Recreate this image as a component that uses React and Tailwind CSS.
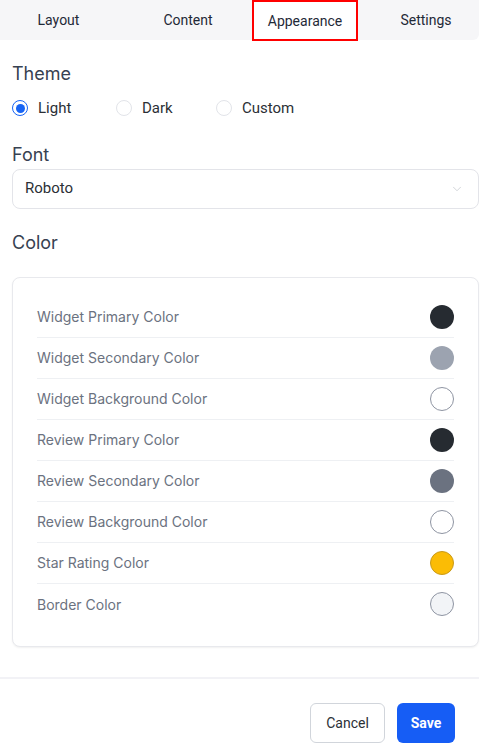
import { ChevronDown } from 'lucide-react';

const tabs = [
  { label: 'Layout', cls: 'w-[117px]' },
  { label: 'Content', cls: 'ml-[21px] w-[100px]' },
  { label: 'Appearance', cls: 'ml-[14px] w-[106px]', active: true },
  { label: 'Settings', cls: 'ml-[15px] w-[106px]' },
];

const themes = [
  { id: 'light', label: 'Light', checked: true, width: 'w-[104px]' },
  { id: 'dark', label: 'Dark', checked: false, width: 'w-[100px]' },
  { id: 'custom', label: 'Custom', checked: false, width: 'w-auto' },
];

const colors = [
  { label: 'Widget Primary Color', swatch: 'bg-[#262b31]' },
  { label: 'Widget Secondary Color', swatch: 'bg-[#9ca3b0]' },
  { label: 'Widget Background Color', swatch: 'bg-white border border-[#8e94a2]' },
  { label: 'Review Primary Color', swatch: 'bg-[#262b31]' },
  { label: 'Review Secondary Color', swatch: 'bg-[#6b7280]' },
  { label: 'Review Background Color', swatch: 'bg-white border border-[#8e94a2]' },
  { label: 'Star Rating Color', swatch: 'bg-[#fbbc05] border border-[#c99a1a]' },
  { label: 'Border Color', swatch: 'bg-[#f2f4f7] border border-[#8e94a2]' },
];

function Radio({ label, checked, width }) {
  return (
    <label className={`flex items-center gap-[10px] ${width}`}>
      <span
        className={`flex h-4 w-4 items-center justify-center rounded-full ${
          checked ? 'border-[1.5px] border-[#1764f4]' : 'border border-[#e2e4e9]'
        }`}
      >
        {checked && <span className="h-[9px] w-[9px] rounded-full bg-[#1764f4]" />}
      </span>
      <span className="text-[15px] text-[#2b2f36]">{label}</span>
    </label>
  );
}

export default function App() {
  return (
    <div className="min-h-[752px] w-[479px] bg-white font-['Roboto',sans-serif]">
      <div className="flex h-10 rounded-br-md bg-[#f6f6f8]">
        {tabs.map((tab) => (
          <div
            key={tab.label}
            className={`flex items-center justify-center text-sm text-[#1f2937] ${tab.cls} ${
              tab.active ? 'h-[41px] border-2 border-[#ff0000] bg-white' : ''
            }`}
          >
            {tab.label}
          </div>
        ))}
      </div>

      <div className="pl-3">
        <h3 className="mt-[22px] font-['Inter',sans-serif] text-lg leading-6 text-[#374151]">Theme</h3>
        <div className="mt-[11px] flex items-center">
          {themes.map((t) => (
            <Radio key={t.id} {...t} />
          ))}
        </div>

        <h3 className="mt-[23px] font-['Inter',sans-serif] text-lg leading-6 text-[#374151]">Font</h3>
        <button className="mt-[2px] flex h-10 w-full items-center justify-between rounded-lg border border-[#e3e4e9] pl-3 pr-[14px] text-[15px] text-[#2b2f36]">
          <span>Roboto</span>
          <ChevronDown className="h-[14px] w-[14px] text-[#c3c6cc]" strokeWidth={1.25} />
        </button>

        <h3 className="mt-[22px] font-['Inter',sans-serif] text-lg leading-6 text-[#374151]">Color</h3>

        <div className="mt-[22px] rounded-lg border border-[#e8e9ed] bg-white px-6 pb-[21px] pt-[19px] shadow-[0_1px_2px_rgba(0,0,0,0.06)]">
          {colors.map((c, i) => (
            <div
              key={c.label}
              className={`flex h-[41px] items-center justify-between ${
                i < colors.length - 1 ? 'border-b border-[#eef0f3]' : ''
              }`}
            >
              <span className="font-['Inter',sans-serif] text-[14px] text-[#6b7280]">{c.label}</span>
              <span className={`h-6 w-6 rounded-full ${c.swatch}`} />
            </div>
          ))}
        </div>
      </div>

      <div className="mt-[30px] border-t-2 border-[#f2f2f6]" />

      <div className="flex justify-end gap-3 px-6 pt-[24px]">
        <button className="h-10 w-[75px] rounded-md border border-[#d1d5db] bg-white text-sm text-[#2b2f36]">
          Cancel
        </button>
        <button className="h-10 w-[58px] rounded-md bg-[#165df5] text-sm font-bold text-white">Save</button>
      </div>
    </div>
  );
}
